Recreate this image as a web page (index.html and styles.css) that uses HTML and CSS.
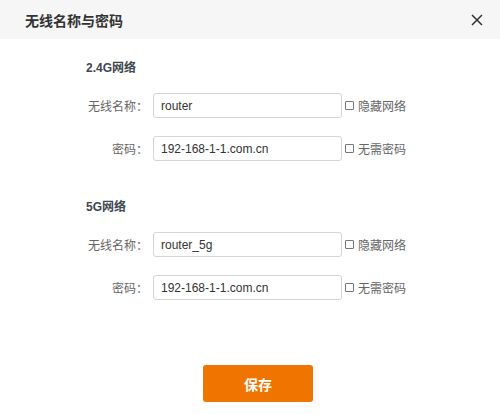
FILE: index.html
```html
<!DOCTYPE html>
<html lang="zh-CN">
<head>
<meta charset="utf-8">
<title>无线名称与密码</title>
<link rel="stylesheet" href="styles.css">
</head>
<body>
<div class="dialog">
  <div class="header">
    <span class="title">无线名称与密码</span>
    <svg class="close" width="12" height="12" viewBox="0 0 12 12"><path d="M1 1L11 11M11 1L1 11" stroke="#333" stroke-width="1.5" fill="none"/></svg>
  </div>
  <div class="content">
    <div class="section">
      <div class="section-title">2.4G网络</div>
      <div class="row">
        <label class="label">无线名称：</label>
        <input class="field" type="text" value="router">
        <label class="check"><input type="checkbox" class="box"><span>隐藏网络</span></label>
      </div>
      <div class="row">
        <label class="label">密码：</label>
        <input class="field" type="text" value="192-168-1-1.com.cn">
        <label class="check"><input type="checkbox" class="box"><span>无需密码</span></label>
      </div>
    </div>
    <div class="section second">
      <div class="section-title">5G网络</div>
      <div class="row">
        <label class="label">无线名称：</label>
        <input class="field" type="text" value="router_5g">
        <label class="check"><input type="checkbox" class="box"><span>隐藏网络</span></label>
      </div>
      <div class="row">
        <label class="label">密码：</label>
        <input class="field" type="text" value="192-168-1-1.com.cn">
        <label class="check"><input type="checkbox" class="box"><span>无需密码</span></label>
      </div>
    </div>
    <div class="actions">
      <button class="save" type="button">保存</button>
    </div>
  </div>
</div>
</body>
</html>
```
FILE: styles.css
```css
* { box-sizing: border-box; }
html, body { margin: 0; padding: 0; background: #fff; }
body {
  font-family: "Liberation Sans", "Noto Sans CJK SC", sans-serif;
  color: #333;
  width: 500px;
  height: 415px;
  overflow: hidden;
}
.header {
  height: 39px;
  background: #f6f6f6;
  display: flex;
  align-items: center;
  justify-content: space-between;
  padding: 0 17px 0 25px;
}
.title {
  font-size: 14px;
  font-weight: bold;
  color: #333;
}
.close { display: block; }
.content {
  padding: 19px 0 0 86px;
}
.section-title {
  height: 20px;
  line-height: 20px;
  font-size: 12px;
  font-weight: bold;
  color: #3d4850;
  margin-bottom: 15px;
}
.second { margin-top: 36px; }
.row {
  display: flex;
  align-items: center;
  height: 25px;
  margin-bottom: 18px;
}
.row:last-child { margin-bottom: 0; }
.label {
  width: 62px;
  margin-right: 5px;
  text-align: right;
  font-size: 12px;
  color: #666;
  white-space: nowrap;
}
.field {
  width: 189px;
  height: 25px;
  border: 1px solid #d4d4d4;
  border-radius: 3px;
  padding: 0 7px;
  font-family: "Liberation Sans", "Noto Sans CJK SC", sans-serif;
  font-size: 12px;
  color: #333;
  outline: none;
  margin: 0;
}
.check {
  display: flex;
  align-items: center;
  font-size: 12px;
  color: #666;
}
.box {
  appearance: none;
  -webkit-appearance: none;
  width: 9px;
  height: 9px;
  border: 1px solid #777;
  border-radius: 1px;
  margin: 0 4px 0 3px;
  background: #fff;
}
.actions {
  margin-top: 65px;
  padding-left: 117px;
}
.save {
  width: 110px;
  height: 37px;
  border: none;
  border-radius: 3px;
  background: #ef7500;
  color: #fff;
  font-family: "Liberation Sans", "Noto Sans CJK SC", sans-serif;
  font-size: 14px;
  font-weight: bold;
  cursor: pointer;
}
```
